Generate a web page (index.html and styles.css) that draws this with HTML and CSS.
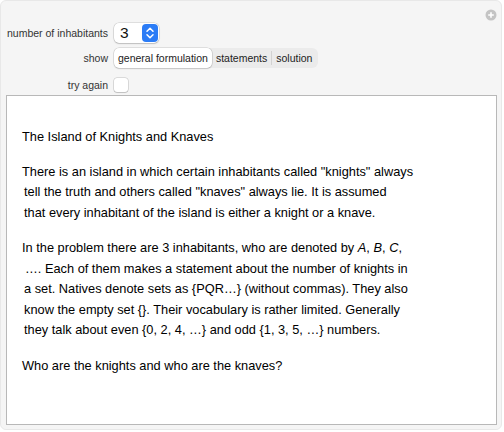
FILE: index.html
```html
<!DOCTYPE html>
<html>
<head>
<meta charset="utf-8">
<link rel="stylesheet" href="styles.css">
</head>
<body>
<div class="panel">
  <span class="plus-icon">
    <svg width="12" height="12" viewBox="0 0 12 12"><circle cx="6" cy="6" r="5.5" fill="#c4c4c4"/><path d="M6 3.2v5.6M3.2 6h5.6" stroke="#fff" stroke-width="1.6"/></svg>
  </span>
  <div class="controls">
    <div class="label">number of inhabitants</div>
    <div class="ctrl">
      <div class="popup">
        <span class="popup-value">3</span>
        <span class="popup-btn">
          <svg width="10" height="14" viewBox="0 0 10 14"><path d="M2 5.2L5 2.2L8 5.2M2 8.8L5 11.8L8 8.8" fill="none" stroke="#fff" stroke-width="1.5" stroke-linecap="round" stroke-linejoin="round"/></svg>
        </span>
      </div>
    </div>
    <div class="label">show</div>
    <div class="ctrl">
      <div class="segmented">
        <span class="seg selected">general formulation</span>
        <span class="seg">statements</span>
        <span class="sep"></span>
        <span class="seg">solution</span>
      </div>
    </div>
    <div class="label row3">try again</div>
    <div class="ctrl row3"><span class="checkbox"></span></div>
  </div>
  <div class="content">
    <p class="para title"><span class="line">The Island of Knights and Knaves</span></p>
    <p class="para">
      <span class="line">There is an island in which certain inhabitants called "knights" always</span>
      <span class="line ind">tell the truth and others called "knaves" always lie. It is assumed</span>
      <span class="line ind">that every inhabitant of the island is either a knight or a knave.</span>
    </p>
    <p class="para">
      <span class="line">In the problem there are 3 inhabitants, who are denoted by <i>A</i>, <i>B</i>, <i>C</i>,</span>
      <span class="line ind2">…. Each of them makes a statement about the number of knights in</span>
      <span class="line ind">a set. Natives denote sets as {PQR…} (without commas). They also</span>
      <span class="line ind">know the empty set {}. Their vocabulary is rather limited. Generally</span>
      <span class="line ind">they talk about even {0, 2, 4, …} and odd {1, 3, 5, …} numbers.</span>
    </p>
    <p class="para"><span class="line">Who are the knights and who are the knaves?</span></p>
  </div>
</div>
</body>
</html>
```
FILE: styles.css
```css
html, body {
  margin: 0;
  padding: 0;
  background: #ffffff;
}

.panel {
  position: relative;
  box-sizing: border-box;
  width: 502px;
  height: 430px;
  background: #f5f5f5;
  border: 1px solid #e8e8e8;
  border-radius: 6px;
  padding: 22px 0 0 5px;
  font-family: "Liberation Sans", Arial, sans-serif;
}

.plus-icon {
  position: absolute;
  top: 8px;
  right: 4px;
  width: 12px;
  height: 12px;
  line-height: 0;
}

.controls {
  display: grid;
  grid-template-columns: 102px auto;
  column-gap: 6px;
  grid-template-rows: 20px 20px 20px;
  row-gap: 5px;
  align-items: center;
}

.row3 { margin-top: 3px; }

.label {
  text-align: right;
  font-size: 10.5px;
  color: #333;
  white-space: nowrap;
}

.ctrl {
  display: flex;
  align-items: center;
}

.popup {
  box-sizing: border-box;
  width: 45px;
  height: 20px;
  background: #fff;
  border-radius: 5px;
  box-shadow: 0 0 0 0.5px rgba(0,0,0,0.18), 0 1px 1.5px rgba(0,0,0,0.15);
  display: flex;
  align-items: center;
  justify-content: space-between;
  padding: 0 1px 0 6px;
}

.popup-value {
  font-size: 15.5px;
  color: #111;
}

.popup-btn {
  width: 16px;
  height: 18px;
  background: #2b7cf6;
  border-radius: 4px;
  display: flex;
  align-items: center;
  justify-content: center;
}

.segmented {
  display: flex;
  align-items: center;
  height: 20px;
  background: #ebebeb;
  border-radius: 6px;
  padding-right: 2px;
}

.seg {
  font-size: 10.5px;
  color: #222;
  padding: 0 4px;
  line-height: 20px;
  white-space: nowrap;
}

.seg.selected {
  background: #fff;
  border-radius: 5px;
  box-shadow: 0 0 0 0.5px rgba(0,0,0,0.18), 0 1px 1.5px rgba(0,0,0,0.12);
}

.sep {
  width: 1px;
  height: 14px;
  background: #d2d2d2;
}

.checkbox {
  box-sizing: border-box;
  width: 14px;
  height: 14px;
  background: #fff;
  border-radius: 3px;
  box-shadow: 0 0 0 0.5px rgba(0,0,0,0.22), 0 1px 1px rgba(0,0,0,0.12);
}

.content {
  box-sizing: border-box;
  width: 491px;
  height: 330px;
  margin-top: 2px;
  background: #fff;
  border: 1px solid #b8b8b8;
  padding: 31px 0 0 15px;
  font-family: "Liberation Sans", Arial, sans-serif;
  font-size: 12.8px;
  line-height: 20.5px;
  color: #000;
}

.para {
  margin: 0 0 15px 0;
}

.para.title {
  margin-bottom: 14px;
}

.line {
  display: block;
  white-space: nowrap;
}

.ind { padding-left: 2px; }
.ind2 { padding-left: 3px; }
```
